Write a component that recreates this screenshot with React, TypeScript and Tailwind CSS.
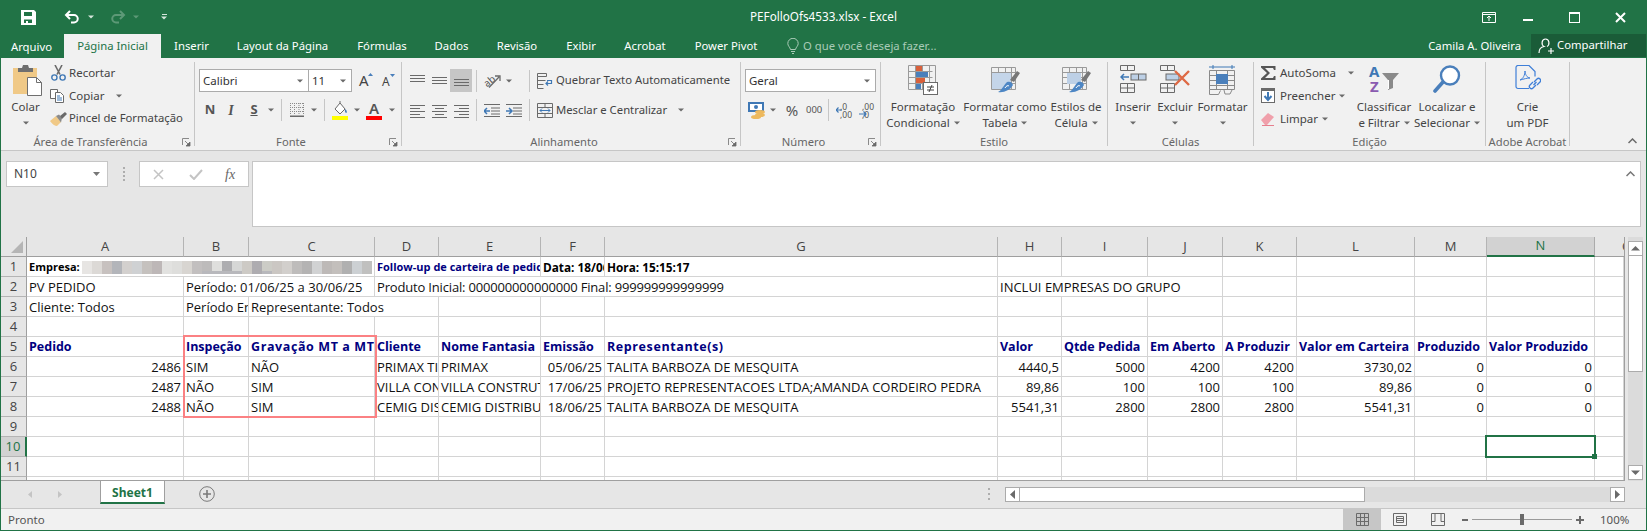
import React from "react";

const G = "#6a6a6a";
const B = "#4a7fbb";

function Car({ c = "#6a6a6a", cls = "" }: { c?: string; cls?: string }) {
  return (
    <svg width="6" height="4" viewBox="0 0 6 4" className={`shrink-0 ${cls}`}>
      <path d="M0 0.5h6L3 3.5z" fill={c} />
    </svg>
  );
}
function Launcher() {
  return (
    <svg width="9" height="9" viewBox="0 0 9 9" className="shrink-0 mr-[3px] mt-[4px]">
      <path d="M0.5 7V0.5H7" fill="none" stroke="#8a8a8a" />
      <path d="M3 3l4 4M8 4v4H4z" fill="#6a6a6a" stroke="#6a6a6a" strokeWidth="0.8" />
    </svg>
  );
}
function Sep({ cls = "" }: { cls?: string }) {
  return <div className={`w-px h-[22px] bg-[#c6c6c6] shrink-0 ${cls}`} />;
}
function Group({ cls, label, launcher, children }: { cls: string; label: string; launcher?: boolean; children: React.ReactNode }) {
  return (
    <div className={`flex flex-col h-[84px] border-r border-[#c6c6c6] shrink-0 ${cls}`}>
      <div className="h-[72px] flex">{children}</div>
      <div className="h-[12px] flex items-start text-[#666666] text-[11.200px]">
        <span className="flex-1 h-[12px] leading-[16px] text-center whitespace-nowrap">{label}</span>
        {launcher && <span className="w-[14px] flex justify-end"><Launcher /></span>}
      </div>
    </div>
  );
}
function Big({ cls, icon, l1, l2 }: { cls: string; icon: React.ReactNode; l1: string; l2?: string }) {
  return (
    <div className={`flex flex-col items-center shrink-0 ${cls}`}>
      <div className="h-[37px] pt-[3px] flex justify-center">{icon}</div>
      <div className="h-[16px] leading-[16px] whitespace-nowrap">{l1}</div>
      <div className="h-[16px] flex items-center justify-center gap-[4px] whitespace-nowrap leading-[16px]">
        {l2 && <span>{l2}</span>}
        <Car />
      </div>
    </div>
  );
}

function Lines({ ys, xs }: { ys: number[]; xs?: [number, number][] }) {
  return (
    <svg width="15" height="15" viewBox="0 0 15 15" className="shrink-0">
      {ys.map((y, i) => {
        const [x1, x2] = xs ? xs[i] : [0, 15];
        return <rect key={i} x={x1} y={y} width={x2 - x1} height="1" fill={G} />;
      })}
    </svg>
  );
}

function Save() {
  return (
    <svg width="15" height="15" viewBox="0 0 15 15">
      <path fillRule="evenodd" fill="#fff" d="M0 0h13l2 2v13H0zM3 2v4h8V2zM3 9.5V13h2v-2h2v2h4V9.5z" />
    </svg>
  );
}
function Undo({ c = "#fff", flip = false }: { c?: string; flip?: boolean }) {
  return (
    <svg width="16" height="14" viewBox="0 0 16 14" style={flip ? { transform: "scaleX(-1)" } : undefined}>
      <path d="M6 1L2 5l4 4M2.5 5H10a3.6 3.6 0 0 1 0 7.5H7" fill="none" stroke={c} strokeWidth="2" />
    </svg>
  );
}
function Paste() {
  return (
    <svg width="30" height="31" viewBox="0 0 30 31">
      <rect x="0" y="3" width="24" height="26" fill="#f0c987" />
      <path d="M5 3h4l1-3h5l1 3h4v4H5z" fill="#6f6f6f" />
      <path d="M14.5 12.5h9l5 5v13h-14z" fill="#fff" stroke="#6f6f6f" />
      <path d="M23.5 12.5v5h5" fill="none" stroke="#6f6f6f" />
    </svg>
  );
}
function Scissors() {
  return (
    <svg width="15" height="16" viewBox="0 0 15 16">
      <path d="M4 0l5 9.5M11 0L6 9.5" stroke="#6a6a6a" strokeWidth="1.6" fill="none" />
      <circle cx="3.4" cy="12.5" r="2.6" fill="none" stroke="#3f78b5" strokeWidth="1.4" />
      <circle cx="11.6" cy="12.5" r="2.6" fill="none" stroke="#3f78b5" strokeWidth="1.4" />
    </svg>
  );
}
function Copy() {
  return (
    <svg width="15" height="14" viewBox="0 0 15 14">
      <path d="M.5.5h7v9h-7z" fill="#fff" stroke="#6a6a6a" />
      <path d="M5.5 3.5h5l3 3v7h-8z" fill="#fff" stroke="#6a6a6a" />
      <path d="M7 7h3M7 9h5M7 11h5" stroke="#3f78b5" />
    </svg>
  );
}
function Brush() {
  return (
    <svg width="17" height="14" viewBox="0 0 17 14">
      <path d="M0 9l6-5 5 6-4 4c-2 0-5-2-7-5z" fill="#f0c987" />
      <path d="M6 4l3-1.5 3 3.500-1 4.500z" fill="#8a8a8a" />
      <path d="M10 4l5-4 2 2-5 5z" fill="#6a6a6a" />
    </svg>
  );
}
function BordersIc() {
  return (
    <svg width="14" height="14" viewBox="0 0 14 14">
      <path d="M0.500 0v12M4.500 0v12M9 0v12M13.500 0v12M0 .5h14M0 4.500h14M0 8.500h14" stroke="#8a8a8a" strokeDasharray="1 1" fill="none" />
      <rect x="0" y="12.500" width="14" height="1.500" fill="#6a6a6a" />
    </svg>
  );
}
function FillIc() {
  return (
    <svg width="16" height="19" viewBox="0 0 16 19">
      <path d="M3 8l5-6 5 6-5 5z" fill="#fff" stroke="#6a6a6a" />
      <path d="M8 2V0" stroke="#6a6a6a" />
      <path d="M13 8c2 1 2 3 1.500 4-1 .5-2-2-1.500-4z" fill="#3f78b5" />
      <rect x="0" y="15" width="16" height="4" fill="#ffff00" />
    </svg>
  );
}
function ColorIc() {
  return (
    <div className="w-[16px] flex flex-col items-center leading-none">
      <span className="text-[15px] leading-[15px] font-semibold text-[#555555]">A</span>
      <div className="w-[16px] h-[4px] bg-[#ff0000]" />
    </div>
  );
}
function Orient() {
  return (
    <svg width="18" height="17" viewBox="0 0 18 17">
      <text x="0" y="13" fontSize="10" fill="#555" fontFamily="Noto Sans" transform="rotate(-40 5 10)">ab</text>
      <path d="M5 15.500L15 5M11 4h5v5" fill="none" stroke="#6a6a6a" strokeWidth="1.300" />
    </svg>
  );
}
function Wrap() {
  return (
    <svg width="16" height="16" viewBox="0 0 16 16">
      <path d="M.5.5h9v3h-9zM.5 3.500v12h6M.5 7.500h8M.5 11.500h6" fill="none" stroke="#6a6a6a" />
      <path d="M10 7.500h4.500v3H9M11 8.500l-2 2 2 2" fill="none" stroke="#3f78b5" strokeWidth="1.200" />
    </svg>
  );
}
function Merge() {
  return (
    <svg width="16" height="15" viewBox="0 0 16 15">
      <path d="M.5.5h15v14H.5zM.5 4.500h15M.5 10.500h15M8 .5v4M8 10.500v4" fill="none" stroke="#6a6a6a" />
      <path d="M3 7.500h10M5 5.500l-2 2 2 2M11 5.500l2 2-2 2" fill="none" stroke="#3f78b5" />
    </svg>
  );
}
function Currency() {
  return (
    <svg width="18" height="17" viewBox="0 0 18 17">
      <rect x="0" y="0" width="16" height="10" fill="#3f78b5" />
      <rect x="2" y="2" width="12" height="6" fill="#fff" />
      <circle cx="8" cy="5" r="2" fill="#3f78b5" />
      <ellipse cx="12" cy="10" rx="5" ry="2" fill="#edb95e" />
      <ellipse cx="12" cy="13" rx="5" ry="2" fill="#edb95e" />
      <ellipse cx="8" cy="15" rx="5" ry="2" fill="#edb95e" />
    </svg>
  );
}
function Dec({ top, bot, rev }: { top: string; bot: string; rev?: boolean }) {
  return (
    <svg width="17" height="17" viewBox="0 0 17 17">
      <text x="4" y="8" fontSize="8.500" fill="#555" fontFamily="Noto Sans">{top}</text>
      <text x="4" y="16" fontSize="8.500" fill="#555" fontFamily="Noto Sans">{bot}</text>
      <path d={rev ? "M1 12h7M5.500 9.500L8 12l-2.500 2.500" : "M0 8h6M2.500 5.500L0 8l2.500 2.500"} fill="none" stroke="#3f78b5" strokeWidth="1.200" />
    </svg>
  );
}
function CondFmt() {
  return (
    <svg width="30" height="30" viewBox="0 0 30 30">
      <path d="M.5.5h27v24H.5zM.5 6.500h24M.5 12.500h24M.5 18.500h24M7.500.5v24M14.500.5v24M21.500.5v24" fill="none" stroke="#9a9a9a" />
      <rect x="8" y="1" width="6" height="5" fill="#d9603b" />
      <rect x="8" y="7" width="12" height="5" fill={B} />
      <rect x="8" y="13" width="9" height="5" fill="#d9603b" />
      <rect x="8" y="19" width="5" height="5" fill={B} />
      <rect x="15.500" y="17.500" width="14" height="12" fill="#fff" stroke="#6a6a6a" />
      <path d="M19 22h7M19 25h7M24 20l-3 7" stroke="#444" fill="none" />
    </svg>
  );
}
function TableFmt({ big }: { big?: boolean }) {
  return (
    <svg width="30" height="30" viewBox="0 0 30 30">
      <path d="M1.500 2.500h24v22h-24zM1.500 7.500h24M1.500 12.500h24M1.500 18.500h24M8.500 2.500v22M15.500 2.500v22M21.500 2.500v22" fill="none" stroke="#9a9a9a" />
      {big ? <rect x="6" y="8" width="14" height="11" fill="#bdd0e6" /> : <rect x="2" y="8" width="19" height="16" fill="#c4d5e9" />}
      <path d="M20 15l7-9 3 2-6 9z" fill="#777" />
      <path d="M17 17c3-1 5 0 6 3-3 5-9 8-15 7 4-2 5-6 9-10z" fill="#4d86c4" />
      <path d="M15 23c1-2 3-3 4-2" stroke="#fff" fill="none" />
    </svg>
  );
}
function InsertIc() {
  return (
    <svg width="27" height="28" viewBox="0 0 27 28">
      <path d="M.5.5h14v5H.5zM7.500.5v5M.5 18.500h14v9H.5zM.5 23h14M7.500 18.500v9" fill="none" stroke="#6a6a6a" />
      <rect x="11" y="9" width="15" height="6" fill="#bdd0e6" stroke="#6a6a6a" />
      <path d="M18.500 9v6" stroke="#6a6a6a" />
      <path d="M1 12h8M4 9l-3 3 3 3" fill="none" stroke="#3f78b5" strokeWidth="1.500" />
    </svg>
  );
}
function DeleteIc() {
  return (
    <svg width="31" height="28" viewBox="0 0 31 28">
      <path d="M.5.5h14v5H.5zM7.500.5v5M.5 18.500h14v9H.5zM.5 23h14M7.500 18.500v9" fill="none" stroke="#6a6a6a" />
      <rect x="6" y="9" width="13" height="6" fill="#bdd0e6" stroke="#6a6a6a" />
      <path d="M15 6l14 14M29 6L15 20" stroke="#de6a45" strokeWidth="2.400" />
    </svg>
  );
}
function FormatIc() {
  return (
    <svg width="29" height="30" viewBox="0 0 29 30">
      <path d="M1 2h26M5 0v4M24 0v4" stroke="#3f78b5" fill="none" />
      <path d="M1.500 5.500h25v19h-25zM1.500 10.500h25M1.500 15.500h25M1.500 20.500h25M8.500 5.500v19M19.500 5.500v19" fill="none" stroke="#8a8a8a" />
      <rect x="8" y="9" width="12" height="10" fill={B} />
      <path d="M1.500 24.500v5h9l2-4M16 25l1 4h5l2-4" fill="none" stroke="#8a8a8a" />
    </svg>
  );
}
function Sigma() {
  return (
    <svg width="15" height="14" viewBox="0 0 15 14">
      <path d="M0 0h14.500v4h-1.500l-1-2H4l5 5-5 5h8l1-2h1.500v4H0v-1.500L6 7 0 1.500z" fill="#555" />
    </svg>
  );
}
function FillDown() {
  return (
    <svg width="14" height="15" viewBox="0 0 14 15">
      <rect x=".5" y=".5" width="13" height="14" fill="#fff" stroke="#6a6a6a" />
      <rect x="0" y="0" width="14" height="3" fill="#6a6a6a" />
      <path d="M7 4v7M3.500 8L7 12l3.500-4" fill="none" stroke="#3f78b5" strokeWidth="2" />
    </svg>
  );
}
function Eraser() {
  return (
    <svg width="14" height="14" viewBox="0 0 14 14">
      <path d="M0 8l7-7 6 4-7 8H4z" fill="#f0a0ab" />
      <path d="M1 13.500h12" stroke="#e67f8e" />
    </svg>
  );
}
function SortIc() {
  return (
    <svg width="30" height="28" viewBox="0 0 30 28" className="overflow-visible">
      <text x="0" y="12" fontSize="15" fontWeight="700" fill="#3f78b5" fontFamily="Noto Sans">A</text>
      <text x="1" y="27" fontSize="15" fontWeight="700" fill="#8a5bb0" fontFamily="Noto Sans">Z</text>
      <path d="M13 8h17l-6 7v8l-5 2V15z" fill="#8a8a8a" />
      <path d="M19.500 15v9" stroke="#fff" />
    </svg>
  );
}
function SearchIc() {
  return (
    <svg width="28" height="28" viewBox="0 0 28 28">
      <circle cx="17" cy="10.500" r="9" fill="#fff" stroke="#4a7fbb" strokeWidth="2.400" />
      <path d="M10 17L2 26" stroke="#4a7fbb" strokeWidth="3.600" strokeLinecap="round" />
    </svg>
  );
}
function PdfIc() {
  return (
    <svg width="26" height="25" viewBox="0 0 26 25">
      <path d="M14 23.500H3a2 2 0 0 1-2-2v-19a2 2 0 0 1 2-2h11l6 6v5" fill="none" stroke="#3f7fd8" strokeWidth="1.200" />
      <path d="M5 15c3-1 5-5 5-9 0 3 2 7 5 7-3 0-6 1-10 2z" fill="none" stroke="#3f7fd8" />
      <path d="M18 17l-3 3a2 2 0 0 0 3 3l3-3M19 17l3-3a2 2 0 0 1 3 3l-3 3M18.500 20l3-3" fill="none" stroke="#3f7fd8" strokeWidth="1.300" />
    </svg>
  );
}
function Mosaic() {
  const tops = ["#e7e5e3","#dcd9d6","#c7c1bf","#b3b5ba","#d3d0ce","#cfd1d3","#c5c1be","#bdb7b7","#e2e2e0","#dededc","#d8d5d1","#c2bfbf","#bdbbbb","#dfdfdd","#adadb0","#d6d7d6","#cdcac5","#aeacb0","#ccccc6","#cbc7c3","#d2cfcc","#bebcbb","#b4b3b3","#d1d2d3","#bdb9b7","#c3bfbc","#b0b0b0","#ccd0d3","#c0c0bf"];
  return (
    <svg width="290" height="13" viewBox="0 0 290 13" className="shrink-0">
      {tops.map((c, i) => (
        <rect key={i} x={i * 10} y="0" width="10" height="13" fill={c} />
      ))}
      {[12, 13, 14, 15, 18].map((i) => (
        <rect key={i} x={i * 10} y="10" width="10" height="3" fill="#b8b8bc" />
      ))}
    </svg>
  );
}

const cols = ["A","B","C","D","E","F","G","H","I","J","K","L","M","N"];
type K = "r" | "h" | "H" | "b" | "f" | "t";
type C = { t?: React.ReactNode; s?: 1 | 2 | 3 | 4; k?: K };
const e = (n: number): C[] => Array.from({ length: n }, () => ({}));
const wideHeads = ["Gravação MT a MT", "Representante(s)"];
const rows: C[][] = [
  [
    { s: 3, k: "b", t: <span className="flex items-center gap-[2px]"><span className="w-[51px] text-[11px]">Empresa:</span><Mosaic /><span className="w-px h-[6px] bg-black" /></span> },
    { s: 2, k: "f", t: "Follow-up de carteira de pedidos" },
    { k: "b", t: "Data: 18/06/25" },
    { k: "b", t: "Hora: 15:15:17" },
    ...e(8),
  ],
  [
    { t: "PV PEDIDO" },
    { s: 2, t: "Período: 01/06/25 a 30/06/25" },
    { s: 4, k: "t", t: "Produto Inicial: 000000000000000 Final: 999999999999999" },
    { s: 3, t: "INCLUI EMPRESAS DO GRUPO" },
    ...e(5),
  ],
  [
    { t: "Cliente: Todos" },
    { t: "Período Emissão" },
    { s: 2, t: "Representante: Todos" },
    ...e(11),
  ],
  e(15),
  [
    ...["Pedido","Inspeção","Gravação MT a MT","Cliente","Nome Fantasia","Emissão","Representante(s)","Valor","Qtde Pedida","Em Aberto","A Produzir","Valor em Carteira","Produzido","Valor Produzido"].map((t): C => ({ t, k: wideHeads.includes(t) ? "H" : "h" })),
    {},
  ],
  [
    { t: "2486", k: "r" }, { t: "SIM" }, { t: "NÃO" }, { t: "PRIMAX TINTAS" }, { t: "PRIMAX" }, { t: "05/06/25", k: "r" },
    { t: "TALITA BARBOZA DE MESQUITA" }, { t: "4440,5", k: "r" }, { t: "5000", k: "r" }, { t: "4200", k: "r" }, { t: "4200", k: "r" }, { t: "3730,02", k: "r" }, { t: "0", k: "r" }, { t: "0", k: "r" }, {},
  ],
  [
    { t: "2487", k: "r" }, { t: "NÃO" }, { t: "SIM" }, { t: "VILLA CONSTRUTORA" }, { t: "VILLA CONSTRUTORA" }, { t: "17/06/25", k: "r" },
    { t: "PROJETO REPRESENTACOES LTDA;AMANDA CORDEIRO PEDRA" }, { t: "89,86", k: "r" }, { t: "100", k: "r" }, { t: "100", k: "r" }, { t: "100", k: "r" }, { t: "89,86", k: "r" }, { t: "0", k: "r" }, { t: "0", k: "r" }, {},
  ],
  [
    { t: "2488", k: "r" }, { t: "NÃO" }, { t: "SIM" }, { t: "CEMIG DISTRIBUICAO" }, { t: "CEMIG DISTRIBUICAO" }, { t: "18/06/25", k: "r" },
    { t: "TALITA BARBOZA DE MESQUITA" }, { t: "5541,31", k: "r" }, { t: "2800", k: "r" }, { t: "2800", k: "r" }, { t: "2800", k: "r" }, { t: "5541,31", k: "r" }, { t: "0", k: "r" }, { t: "0", k: "r" }, {},
  ],
  e(15),
  e(15),
  e(15),
  e(15),
];
const spanCls = { 1: "", 2: "col-span-2", 3: "col-span-3", 4: "col-span-4" } as const;
const kindCls = {
  r: "justify-end",
  h: "font-bold text-[12.500px] text-[#000080]",
  H: "font-bold text-[12.500px] tracking-[0.6px] text-[#000080]",
  b: "font-bold text-[11.800px] text-black",
  f: "font-bold text-[11px] text-[#000080]",
  t: "tracking-[-0.17px]",
} as const;

function Sheet() {
  return (
    <div className="relative w-[1624px] h-[244px] shrink-0 overflow-hidden border-r border-b border-[#9f9f9f] bg-white font-['Open_Sans',sans-serif] text-[13px] text-[#111111]">
      <div className="grid grid-cols-[26px_157px_65px_126px_64px_102px_64px_393px_64px_86px_75px_74px_118px_72px_108px_29px] auto-rows-[20px]">
        <div className="bg-[#e6e6e6] border-r border-b border-[#9f9f9f] flex items-end justify-end p-[3px]">
          <svg width="12" height="12" viewBox="0 0 12 12"><path d="M12 0v12H0z" fill="#b5b5b5" /></svg>
        </div>
        {cols.map((c) => (
          <div key={c} className={c === "N"
            ? "bg-[#d2d2d2] border-r border-[#ababab] border-b-2 border-b-[#217346] flex items-center justify-center text-[#217346]"
            : "bg-[#e6e6e6] border-r border-[#b4b4b4] border-b border-b-[#9f9f9f] flex items-center justify-center text-[#444444]"}>{c}</div>
        ))}
        <div className="bg-[#e6e6e6] border-b border-[#9f9f9f] overflow-hidden text-[#444444]"><div className="w-[64px] h-full flex items-center justify-center">O</div></div>
        {rows.map((r, i) => (
          <React.Fragment key={i}>
            <div className={i === 9
              ? "bg-[#d2d2d2] border-r-2 border-r-[#217346] border-b border-b-[#b4b4b4] flex items-center justify-center pt-px text-[#217346]"
              : "bg-[#e6e6e6] border-r border-[#9f9f9f] border-b border-b-[#b4b4b4] flex items-center justify-center pt-px text-[#444444]"}>{i + 1}</div>
            {r.map((c, j) => (
              <div key={j} className={`border-r border-b border-[#d4d4d4] px-[2px] pt-[2px] flex items-center overflow-hidden whitespace-nowrap ${spanCls[c.s || 1]} ${c.k ? kindCls[c.k] : ""}`}>
                {c.t}
              </div>
            ))}
          </React.Fragment>
        ))}
      </div>
      <div className="absolute left-[182px] top-[98px] w-[194px] h-[83px] border-2 border-[#fb8183]" />
      <div className="absolute left-[1484px] top-[198px] w-[111px] h-[23px] border-2 border-[#217346]">
        <div className="absolute right-[-3px] bottom-[-3px] w-[5px] h-[5px] bg-[#217346]" />
      </div>
    </div>
  );
}

function ScrollBtn({ d, cls = "" }: { d: string; cls?: string }) {
  return (
    <div className={`w-[15px] h-[15px] bg-white border border-[#ababab] flex items-center justify-center shrink-0 ${cls}`}>
      <svg width="9" height="9" viewBox="0 0 9 9"><path d={d} fill="#6a6a6a" /></svg>
    </div>
  );
}

export default function App() {
  return (
    <div className="w-[1647px] h-[531px] overflow-hidden flex flex-col border-x border-b border-[#217346] bg-[#e6e6e6] font-['Noto_Sans',sans-serif] text-[11.500px] text-[#444444]">
      {/* title bar */}
      <div className="h-[34px] shrink-0 bg-[#217346] flex items-center text-white text-[11.700px]">
        <div className="w-[170px] flex items-center">
          <span className="ml-[20px]"><Save /></span>
          <span className="ml-[28px]"><Undo /></span>
          <Car c="#d6e6dc" cls="ml-[8px]" />
          <span className="ml-[16px]"><Undo c="#5d9977" flip /></span>
          <Car c="#5d9977" cls="ml-[7px]" />
          <span className="ml-[22px] flex flex-col items-center gap-[1px]">
            <span className="w-[5px] h-px bg-[#d6e6dc]" />
            <Car c="#d6e6dc" />
          </span>
        </div>
        <div className="flex-1 text-center">PEFolloOfs4533.xlsx - Excel</div>
        <div className="w-[170px] flex items-center">
          <svg className="ml-[6px]" width="14" height="11" viewBox="0 0 14 11"><path d="M.5.5h13v10H.5zM.5 2.500h13M7 9V4M5 6l2-2 2 2" fill="none" stroke="#fff" /></svg>
          <div className="ml-[27px] w-[10px] h-[2px] bg-white mt-[6px]" />
          <div className="ml-[36px] w-[11px] h-[11px] border border-white border-t-2" />
          <svg className="ml-[35px]" width="11" height="11" viewBox="0 0 11 11"><path d="M1 1l9 9M10 1l-9 9" stroke="#fff" strokeWidth="2" /></svg>
        </div>
      </div>
      {/* tabs */}
      <div className="h-[24px] shrink-0 bg-[#217346] flex items-center text-white text-[11.300px]">
        <div className="w-[61px] text-center pt-[2px] mr-[2px]">Arquivo</div>
        <div className="w-[97px] h-full bg-[#f1f1f1] text-[#217346] flex items-center justify-center">Página Inicial</div>
        <div className="w-[61px] text-center">Inserir</div>
        <div className="w-[121px] text-center">Layout da Página</div>
        <div className="w-[78px] text-center">Fórmulas</div>
        <div className="w-[61px] text-center">Dados</div>
        <div className="w-[70px] text-center">Revisão</div>
        <div className="w-[58px] text-center">Exibir</div>
        <div className="w-[70px] text-center">Acrobat</div>
        <div className="w-[92px] text-center">Power Pivot</div>
        <svg className="ml-[15px]" width="12" height="16" viewBox="0 0 12 16"><path d="M3.500 11.500C3 9 .8 8 .8 5.500a5.200 5.200 0 0 1 10.400 0c0 2.500-2.200 3.500-2.700 6zM4 13.500h4M5 15.500h2" fill="none" stroke="#a9cbb7" /></svg>
        <div className="ml-[4px] w-[134px] text-[#a9cbb7] whitespace-nowrap">O que você deseja fazer...</div>
        <div className="flex-1 text-right pr-[10px] whitespace-nowrap">Camila A. Oliveira</div>
        <div className="w-[115px] h-[23px] mb-[1px] bg-[#1a5c38] flex items-center pl-[7px] gap-[3px]">
          <svg width="16" height="16" viewBox="0 0 16 16"><path d="M1 15c0-4 2-6 5-6.500C3 7 3.500 1 7.500 1s4.500 6 1.500 7.500M10 13h6M13 10v6" fill="none" stroke="#fff" strokeWidth="1.200" /></svg>
          <span>Compartilhar</span>
        </div>
      </div>
      {/* ribbon */}
      <div className="h-[93px] shrink-0 bg-[#f1f1f1] border-b border-[#c6c6c6] pt-[4px] flex">
        <Group cls="w-[194px]" label="Área de Transferência" launcher>
          <div className="w-[49px] flex flex-col items-center shrink-0">
            <div className="h-[37px] pt-[3px] pl-[5px]"><Paste /></div>
            <div className="h-[16px] leading-[16px]">Colar</div>
            <div className="h-[16px] flex items-center"><Car /></div>
          </div>
          <div className="flex flex-col">
            <div className="h-[23px] pb-[2px] flex items-center"><span className="w-[19px] pl-px flex"><Scissors /></span>Recortar</div>
            <div className="h-[23px] pb-[2px] flex items-center"><span className="w-[19px] flex"><Copy /></span><span className="w-[47px]">Copiar</span><Car /></div>
            <div className="h-[23px] pb-[2px] flex items-center"><span className="w-[19px] flex"><Brush /></span><span className="whitespace-nowrap text-[11.300px]">Pincel de Formatação</span></div>
          </div>
        </Group>
        <Group cls="w-[207px]" label="Fonte" launcher>
          <div className="flex flex-col pt-[7px]">
            <div className="h-[23px] flex items-center">
              <div className="ml-[4px] w-[110px] h-[23px] bg-white border border-[#ababab] flex items-center pl-[3px] pr-[5px] justify-between text-[#333333]">Calibri<Car /></div>
              <div className="w-[43px] h-[23px] bg-white border border-l-0 border-[#ababab] flex items-center pl-[3px] pr-[5px] justify-between text-[#333333]">11<Car /></div>
              <div className="ml-[7px] w-[14px] flex items-start"><span className="text-[15px] leading-none">A</span><svg className="-ml-[1px]" width="5" height="3" viewBox="0 0 5 3"><path d="M0 3h5L2.500 0z" fill={B} /></svg></div>
              <div className="ml-[9px] w-[14px] flex items-start"><span className="text-[12px] leading-none mt-[2px]">A</span><svg width="5" height="3" viewBox="0 0 5 3"><path d="M0 0h5L2.500 3z" fill={B} /></svg></div>
            </div>
            <div className="h-[24px] mt-[6px] flex items-center">
              <div className="ml-[8px] w-[14px] text-center font-bold text-[13px] text-[#555555]">N</div>
              <div className="ml-[7px] w-[14px] text-center italic font-['Liberation_Serif'] font-bold text-[14px] text-[#555555]">I</div>
              <div className="ml-[9px] w-[14px] text-center font-bold text-[13px] underline text-[#555555]">S</div>
              <Car cls="ml-[7px]" />
              <Sep cls="ml-[7px]" />
              <div className="ml-[8px] flex"><BordersIc /></div>
              <Car cls="ml-[7px]" />
              <Sep cls="ml-[7px]" />
              <div className="ml-[7px] flex"><FillIc /></div>
              <Car cls="ml-[6px]" />
              <div className="ml-[6px] flex"><ColorIc /></div>
              <Car cls="ml-[7px]" />
            </div>
          </div>
        </Group>
        <Group cls="w-[339px]" label="Alinhamento" launcher>
          <div className="flex flex-col pt-[7px]">
            <div className="h-[23px] flex items-center">
              <div className="ml-[8px] flex"><Lines ys={[2, 5, 8]} /></div>
              <div className="ml-[7px] flex"><Lines ys={[4, 7, 10]} /></div>
              <div className="ml-[3px] w-[22px] h-[23px] bg-[#c6c6c6] flex items-center justify-center"><Lines ys={[6, 9, 12]} /></div>
              <Sep cls="ml-[4px]" />
              <div className="ml-[7px] flex"><Orient /></div>
              <Car cls="ml-[4px]" />
              <Sep cls="ml-[17px]" />
              <div className="ml-[7px] flex"><Wrap /></div>
              <span className="ml-[3px] whitespace-nowrap text-[11.300px]">Quebrar Texto Automaticamente</span>
            </div>
            <div className="h-[24px] mt-[6px] flex items-center">
              <div className="ml-[8px] flex"><Lines ys={[2, 5, 8, 11, 14]} xs={[[0, 15], [0, 10], [0, 15], [0, 10], [0, 15]]} /></div>
              <div className="ml-[7px] flex"><Lines ys={[2, 5, 8, 11, 14]} xs={[[0, 15], [3, 12], [0, 15], [3, 12], [0, 15]]} /></div>
              <div className="ml-[7px] flex"><Lines ys={[2, 5, 8, 11, 14]} xs={[[0, 15], [5, 15], [0, 15], [5, 15], [0, 15]]} /></div>
              <Sep cls="ml-[7px]" />
              <svg className="ml-[7px]" width="16" height="15" viewBox="0 0 16 15"><path d="M0 1.500h16M7 5h9M7 8h9M7 11h9M0 13.500h16" stroke="#6a6a6a" fill="none" /><path d="M0 8h6M3 5L0 8l3 3" stroke="#3f78b5" strokeWidth="1.500" fill="none" /></svg>
              <svg className="ml-[6px]" width="16" height="15" viewBox="0 0 16 15"><path d="M0 1.500h16M7 5h9M7 8h9M7 11h9M0 13.500h16" stroke="#6a6a6a" fill="none" /><path d="M0 8h6M3 5l3 3-3 3" stroke="#3f78b5" strokeWidth="1.500" fill="none" /></svg>
              <Sep cls="ml-[7px]" />
              <div className="ml-[7px] flex"><Merge /></div>
              <span className="ml-[3px] w-[110px] whitespace-nowrap text-[11.300px]">Mesclar e Centralizar</span>
              <Car cls="ml-[12px]" />
            </div>
          </div>
        </Group>
        <Group cls="w-[140px]" label="Número" launcher>
          <div className="flex flex-col pt-[7px]">
            <div className="h-[23px] ml-[4px] w-[131px] bg-white border border-[#ababab] flex items-center justify-between pl-[3px] pr-[5px] text-[#333333]">Geral<Car /></div>
            <div className="h-[24px] mt-[6px] flex items-center">
              <div className="ml-[7px] flex"><Currency /></div>
              <Car cls="ml-[4px]" />
              <div className="ml-[9px] w-[14px] text-center text-[15px] text-[#555555]">%</div>
              <div className="ml-[7px] w-[15px] text-center text-[9.500px] text-[#555555]">000</div>
              <Sep cls="ml-[7px]" />
              <div className="ml-[7px] flex"><Dec top=",0" bot=",00" /></div>
              <div className="ml-[5px] flex"><Dec top=",00" bot=",0" rev /></div>
            </div>
          </div>
        </Group>
        <Group cls="w-[227px]" label="Estilo">
          <Big cls="w-[84px]" icon={<CondFmt />} l1="Formatação" l2="Condicional" />
          <Big cls="w-[80px]" icon={<TableFmt />} l1="Formatar como" l2="Tabela" />
          <Big cls="w-[62px]" icon={<TableFmt big />} l1="Estilos de" l2="Célula" />
        </Group>
        <Group cls="w-[146px]" label="Células">
          <Big cls="w-[50px]" icon={<InsertIc />} l1="Inserir" />
          <Big cls="w-[34px]" icon={<DeleteIc />} l1="Excluir" />
          <Big cls="w-[61px]" icon={<FormatIc />} l1="Formatar" />
        </Group>
        <Group cls="w-[232px]" label="Edição">
          <div className="w-[105px] flex flex-col shrink-0 pl-[7px]">
            <div className="h-[23px] pb-[2px] flex items-center"><span className="w-[19px] flex"><Sigma /></span><span className="w-[68px]">AutoSoma</span><Car /></div>
            <div className="h-[23px] pb-[2px] flex items-center"><span className="w-[19px] flex"><FillDown /></span><span className="w-[59px]">Preencher</span><Car /></div>
            <div className="h-[23px] pb-[2px] flex items-center"><span className="w-[19px] flex"><Eraser /></span><span className="w-[42px]">Limpar</span><Car /></div>
          </div>
          <Big cls="w-[50px]" icon={<SortIc />} l1="Classificar" l2="e Filtrar" />
          <Big cls="w-[76px]" icon={<SearchIc />} l1="Localizar e" l2="Selecionar" />
        </Group>
        <Group cls="w-[84px]" label="Adobe Acrobat">
          <div className="w-[83px] flex flex-col items-center">
            <div className="h-[37px] pt-[3px] flex justify-center"><PdfIc /></div>
            <div className="h-[16px] leading-[16px]">Crie</div>
            <div className="h-[16px] leading-[16px]">um PDF</div>
          </div>
        </Group>
        <div className="flex-1 h-[84px] flex items-end justify-end pr-[9px] pb-[2px]">
          <svg width="9" height="6" viewBox="0 0 9 6"><path d="M.5 5l4-4 4 4" fill="none" stroke="#6a6a6a" strokeWidth="1.500" /></svg>
        </div>
      </div>
      {/* formula bar */}
      <div className="h-[86px] shrink-0 bg-[#e6e6e6] pt-[10px] flex items-start text-[#444444]">
        <div className="ml-[5px] w-[102px] h-[26px] bg-white border border-[#c6c6c6] flex items-center justify-between pl-[7px] pr-[7px] text-[12px]">N10<svg width="7" height="4" viewBox="0 0 7 4"><path d="M0 0h7L3.500 4z" fill="#777" /></svg></div>
        <div className="ml-[14px] w-[3px] h-[26px] flex flex-col items-center justify-center gap-[2px]">
          <span className="w-[2px] h-[2px] bg-[#adadad]" /><span className="w-[2px] h-[2px] bg-[#adadad]" /><span className="w-[2px] h-[2px] bg-[#adadad]" /><span className="w-[2px] h-[2px] bg-[#adadad]" />
        </div>
        <div className="ml-[14px] w-[110px] h-[26px] bg-white border border-[#c6c6c6] flex items-center">
          <svg className="ml-[13px]" width="11" height="11" viewBox="0 0 11 11"><path d="M1 1l9 9M10 1l-9 9" stroke="#c4c4c4" strokeWidth="1.500" /></svg>
          <svg className="ml-[25px]" width="14" height="11" viewBox="0 0 14 11"><path d="M1 6l4 4 8-9" stroke="#c4c4c4" strokeWidth="2" fill="none" /></svg>
          <span className="ml-[22px] italic font-['Liberation_Serif'] text-[14px] text-[#666666]">fx</span>
        </div>
        <div className="ml-[3px] w-[1389px] h-[66px] bg-white border border-[#c6c6c6] flex justify-end pt-[9px] pr-[5px]">
          <svg width="9" height="6" viewBox="0 0 9 6"><path d="M.5 5l4-4 4 4" fill="none" stroke="#777" strokeWidth="1.500" /></svg>
        </div>
      </div>
      {/* sheet */}
      <div className="flex h-[244px] shrink-0">
        <Sheet />
        <div className="ml-[3px] w-[15px] flex flex-col pt-[4px] pb-[1px] bg-[#dbdbdb]">
          <ScrollBtn d="M0 6.500h9L4.500 2z" />
          <div className="h-[116px] bg-white border border-t-0 border-[#ababab] shrink-0" />
          <div className="flex-1" />
          <ScrollBtn d="M0 2.500h9L4.500 7z" />
        </div>
      </div>
      {/* sheet tabs */}
      <div className="h-[28px] shrink-0 bg-[#e6e6e6] border-b border-[#c6c6c6] flex items-start">
        <svg className="ml-[27px] mt-[10px]" width="5" height="7" viewBox="0 0 5 7"><path d="M4 0v7L0 3.500z" fill="#c4c4c4" /></svg>
        <svg className="ml-[25px] mt-[10px]" width="5" height="7" viewBox="0 0 5 7"><path d="M0 0v7l4-3.500z" fill="#c4c4c4" /></svg>
        <div className="ml-[37px] w-[65px] h-[23px] pt-[2px] bg-white border-x border-[#9f9f9f] border-b-2 border-b-[#217346] flex items-center justify-center font-bold text-[12px] text-[#217346]">Sheet1</div>
        <svg className="ml-[34px] mt-[5px]" width="16" height="16" viewBox="0 0 16 16"><circle cx="8" cy="8" r="7.300" fill="none" stroke="#7a7a7a" /><path d="M8 4v8M4 8h8" stroke="#7a7a7a" strokeWidth="1.600" /></svg>
        <div className="ml-[773px] mt-[7px] w-[3px] flex flex-col gap-[3px]">
          <span className="w-[2px] h-[2px] bg-[#adadad]" /><span className="w-[2px] h-[2px] bg-[#adadad]" /><span className="w-[2px] h-[2px] bg-[#adadad]" />
        </div>
        <div className="ml-[14px] mt-[6px] flex w-[620px] bg-[#dbdbdb]">
          <ScrollBtn d="M7 0v9L2 4.500z" />
          <div className="w-[345px] h-[15px] bg-white border border-l-0 border-[#ababab]" />
          <div className="flex-1" />
          <ScrollBtn d="M2 0v9l5-4.500z" />
        </div>
      </div>
      {/* status bar */}
      <div className="flex-1 bg-[#f1f1f1] flex items-center text-[11.500px]">
        <div className="flex-1 pl-[7px] text-[#555555]">Pronto</div>
        <div className="w-[38px] h-full bg-[#c6c6c6] flex items-center justify-center">
          <svg width="13" height="13" viewBox="0 0 13 13"><path d="M.5.500h12v12H.5zM.5 4.500h12M.5 8.500h12M4.500.5v12M8.500.5v12" fill="none" stroke="#6a6a6a" /></svg>
        </div>
        <div className="w-[38px] h-full flex items-center justify-center">
          <svg width="14" height="13" viewBox="0 0 14 13"><path d="M.5.500h13v12H.5z" fill="none" stroke="#6a6a6a" /><path d="M3.500 3.500h7v6h-7zM3.500 5.500h7M3.500 7.500h7" fill="none" stroke="#6a6a6a" /></svg>
        </div>
        <div className="w-[38px] h-full flex items-center justify-center">
          <svg width="14" height="13" viewBox="0 0 14 13"><path d="M.5.500h13v12H.5zM.5 8.500h3.500v-8M10 .5v8h3.500" fill="none" stroke="#6a6a6a" /></svg>
        </div>
        <div className="ml-[5px] w-[6px] h-[2px] bg-[#6a6a6a]" />
        <div className="ml-[4px] w-[100px] h-px bg-[#9a9a9a] relative">
          <div className="absolute left-[48px] -top-[5px] w-[4px] h-[11px] bg-[#6a6a6a]" />
        </div>
        <svg className="ml-[4px]" width="8" height="8" viewBox="0 0 8 8"><path d="M0 4h8M4 0v8" stroke="#6a6a6a" strokeWidth="2" /></svg>
        <div className="ml-[16px] w-[27px] mr-[19px] text-center text-[#555555]">100%</div>
      </div>
    </div>
  );
}
